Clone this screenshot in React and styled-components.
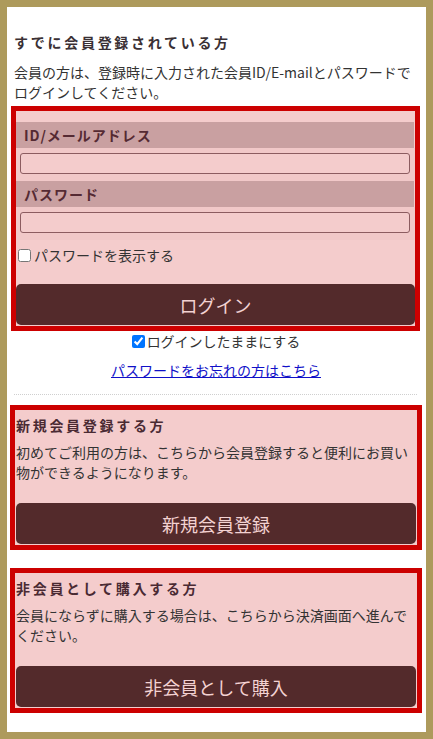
import styled, { createGlobalStyle } from "styled-components";

const GlobalStyle = createGlobalStyle`
  html, body {
    margin: 0;
    background: #ad9a5c;
  }
  body {
    font-family: "Noto Sans CJK JP", "Noto Sans", sans-serif;
    font-size: 14px;
    color: #333;
  }
`;

const guestBoxes = [
  {
    title: "新規会員登録する方",
    text: "初めてご利用の方は、こちらから会員登録すると便利にお買い物ができるようになります。",
    button: "新規会員登録",
  },
  {
    title: "非会員として購入する方",
    text: "会員にならずに購入する場合は、こちらから決済画面へ進んでください。",
    button: "非会員として購入",
  },
];

function App() {
  return (
    <>
      <GlobalStyle />
      <Page>
        <Intro>
          <Heading>すでに会員登録されている方</Heading>
          <Lead>会員の方は、登録時に入力された会員ID/E-mailとパスワードでログインしてください。</Lead>
        </Intro>

        <LoginBox>
          <FieldLabel>ID/メールアドレス</FieldLabel>
          <FieldRow>
            <TextInput type="text" />
          </FieldRow>
          <FieldLabel>パスワード</FieldLabel>
          <FieldRow>
            <TextInput type="password" />
          </FieldRow>
          <CheckRow>
            <input type="checkbox" />
            パスワードを表示する
          </CheckRow>
          <ActionButton>ログイン</ActionButton>
        </LoginBox>

        <KeepRow>
          <input type="checkbox" defaultChecked />
          ログインしたままにする
        </KeepRow>
        <ForgotRow>
          <a href="#">パスワードをお忘れの方はこちら</a>
        </ForgotRow>

        <Divider />

        {guestBoxes.map(({ title, text, button }, i) => (
          <GuestBox key={title} $first={i === 0}>
            <BoxTitle>{title}</BoxTitle>
            <BoxText>{text}</BoxText>
            <ActionButton>{button}</ActionButton>
          </GuestBox>
        ))}
      </Page>
    </>
  );
}

export default App;

const Page = styled.main`
  margin: 7px;
  background: #fff;
  padding: 25px 4px 19px 3px;
`;

const Intro = styled.div`
  padding: 0 4px;
`;

const Heading = styled.h2`
  margin: 0;
  font-size: 14px;
  font-weight: 700;
  line-height: 20px;
  letter-spacing: 2.7px;
  color: #3a3034;
`;

const Lead = styled.p`
  margin: 10px 0 0;
  line-height: 20px;
`;

const Box = styled.section`
  border: 5px solid #cc0000;
  background: #f4cccc;
`;

const LoginBox = styled(Box)`
  margin: 4px 2px 0 1px;
  padding: 11px 0 1px;
`;

const GuestBox = styled(Box)`
  margin-top: ${(p) => (p.$first ? "10px" : "18px")};
  padding: 5px 1px 1px;
`;

const FieldLabel = styled.div`
  margin-right: 1px;
  background: #c9a0a1;
  color: #552a33;
  font-weight: 700;
  line-height: 26px;
  padding-left: 8px;
  letter-spacing: 1px;
`;

const FieldRow = styled.div`
  padding: 5px 5px 7px 4px;
  background: #f1c8c8;
`;

const TextInput = styled.input`
  display: block;
  box-sizing: border-box;
  width: 100%;
  height: 21px;
  border: 1px solid #8c5c60;
  border-radius: 3px;
  background: #f4cccc;
  font-size: 14px;
  padding: 0 4px;
`;

const CheckRow = styled.label`
  display: flex;
  align-items: center;
  margin-top: 5px;
  line-height: 20px;
  color: #333;

  input {
    width: 13px;
    height: 13px;
    margin: 0 3px 0 2px;
  }
`;

const ActionButton = styled.button`
  display: block;
  width: 100%;
  height: 41px;
  margin-top: 19px;
  border: none;
  border-radius: 5px;
  background: #532a2b;
  color: #f3d2d2;
  font-family: "Noto Sans CJK JP", sans-serif;
  font-size: 18px;
  cursor: pointer;

  ${GuestBox} & {
    margin-top: 21px;
  }
`;

const KeepRow = styled.label`
  display: flex;
  justify-content: center;
  align-items: center;
  line-height: 20px;

  input {
    width: 13px;
    height: 13px;
    margin: 0 2px 0 0;
  }
`;

const ForgotRow = styled.div`
  margin-top: 9px;
  text-align: center;
  line-height: 20px;

  a {
    color: #1010c8;
  }
`;

const Divider = styled.hr`
  margin: 14px 5px 0 4px;
  border: none;
  border-top: 1px dotted #cfcfcf;
`;

const BoxTitle = styled.h3`
  margin: 0;
  font-size: 14px;
  font-weight: 700;
  line-height: 20px;
  letter-spacing: 2.7px;
  color: #4a2a33;
`;

const BoxText = styled.p`
  margin: 7px 0 0;
  line-height: 20px;
`;
